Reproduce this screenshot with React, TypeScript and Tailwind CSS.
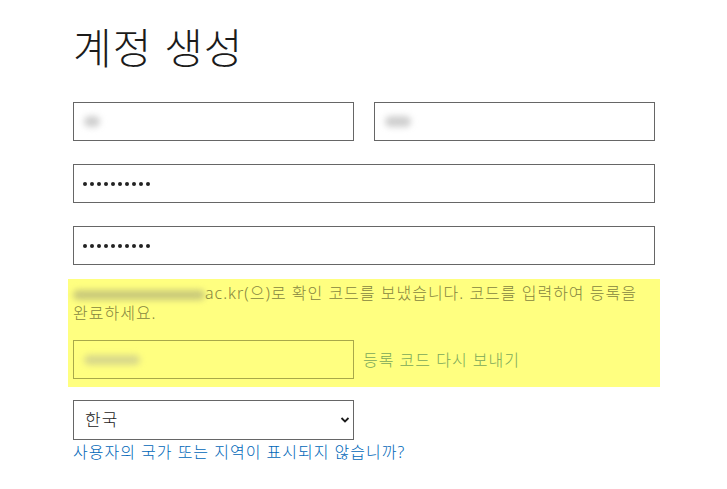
import React from 'react';

const font = '"Noto Sans", "Noto Sans CJK KR", sans-serif';

function Blur({ w }: { w: number }) {
  return (
    <span
      className="inline-block h-[11px] rounded-full bg-[#cfcfcf] blur-[3px] align-middle"
      style={{ width: w }}
    />
  );
}

function Dots() {
  return (
    <div className="flex items-center gap-[3px]">
      {Array.from({ length: 10 }).map((_, i) => (
        <span key={i} className="h-[4px] w-[4px] rounded-full bg-[#222]" />
      ))}
    </div>
  );
}

export default function App() {
  return (
    <div className="min-h-[489px] w-[727px] bg-white" style={{ fontFamily: font }}>
      <div className="w-[582px] pl-[73px] pt-[21px] box-content">
        <h1 className="text-[42px] font-light leading-[54px] tracking-[1px] text-[#1b1b1b]">계정 생성</h1>

        {/* 이름 */}
        <div className="mt-[27px] flex gap-[20px]">
          <div className="flex h-[39px] w-[281px] items-center border border-[#666] px-[10px]">
            <Blur w={16} />
          </div>
          <div className="flex h-[39px] w-[281px] items-center border border-[#666] px-[10px]">
            <Blur w={26} />
          </div>
        </div>

        {/* 비밀번호 */}
        <div className="mt-[23px] flex h-[39px] items-center border border-[#666] px-[9px]">
          <Dots />
        </div>
        <div className="mt-[23px] flex h-[39px] items-center border border-[#666] px-[9px]">
          <Dots />
        </div>

        {/* 확인 코드 */}
        <div className="-mx-[5px] mt-[14px] bg-[#ffff80] px-[5px] pb-[8px] pt-[4px]">
          <p className="text-[16px] font-light leading-[20px] tracking-[1px] text-[#85853f]">
            <span className="inline-block h-[10px] w-[132px] rounded-full bg-[#c9c97a] blur-[3px] align-middle" />
            ac.kr(으)로 확인 코드를 보냈습니다. 코드를 입력하여 등록을 완료하세요.
          </p>
          <div className="mt-[17px] flex items-center gap-[9px]">
            <div className="flex h-[39px] w-[281px] items-center border border-[#a8a84a] px-[10px]">
              <span className="inline-block h-[10px] w-[56px] rounded-full bg-[#d8d88a] blur-[3px]" />
            </div>
            <span className="text-[16px] font-light tracking-[1px] text-[#7aa85a]">등록 코드 다시 보내기</span>
          </div>
        </div>

        {/* 국가 */}
        <div className="mt-[13px] flex h-[40px] w-[281px] items-center justify-between border border-[#666] pl-[11px] pr-[3px]">
          <span className="text-[17px] font-light tracking-[1px] text-[#1b1b1b]">한국</span>
          <svg width="10" height="8" viewBox="0 0 10 8" fill="none">
            <path d="M1.5 2l3.5 3.5L8.5 2" stroke="#1b1b1b" strokeWidth="1.8" />
          </svg>
        </div>
        <div className="mt-[1px] text-[16px] font-light leading-[22px] tracking-[1px] text-[#0067b8]">
          사용자의 국가 또는 지역이 표시되지 않습니까?
        </div>
      </div>
    </div>
  );
}
